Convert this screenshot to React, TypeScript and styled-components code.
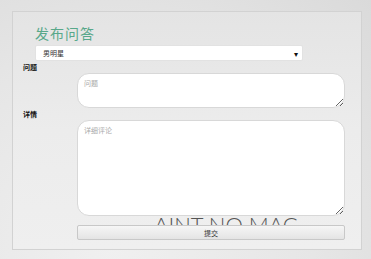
import React from "react"
import styled, { createGlobalStyle } from "styled-components"

const GlobalStyle = createGlobalStyle`
    html, body {
        margin: 0;
        padding: 0;
    }
    body {
        font-family: "Liberation Sans", "Noto Sans CJK SC", sans-serif;
        background: radial-gradient(ellipse at 30% 95%, #f0f0f0 0%, #e6e6e6 55%, #dadada 100%);
        height: 259px;
        overflow: hidden;
    }
`

const App = () => {
    return (
        <>
            <GlobalStyle />
            <Page>
                <Panel>
                    <Title>发布问答</Title>
                    <SelectBox>
                        <span>男明星</span>
                        <Arrow>▾</Arrow>
                    </SelectBox>
                    <Label $gap={1}>问题</Label>
                    <Field $height={35} placeholder="问题" />
                    <Label $gap={1}>详情</Label>
                    <Field $height={96} placeholder="详细评论" />
                    <Banner>AINT NO MAC</Banner>
                    <SubmitButton>提交</SubmitButton>
                </Panel>
            </Page>
        </>
    )
}

const Page = styled.div`
    width: 371px;
    height: 259px;
    padding: 11px 0 0 12px;
    box-sizing: border-box;
`
const Panel = styled.div`
    position: relative;
    width: 350px;
    height: 239px;
    box-sizing: border-box;
    border: 1px solid #d2d2d2;
    background: linear-gradient(180deg, #e4e4e4 0%, #ececec 50%, #efefef 100%);
    padding: 12px 0 0 10px;
    display: flex;
    flex-direction: column;
    align-items: flex-start;
`
const Title = styled.h1`
    margin: 0 0 3px 12px;
    font-family: "Noto Sans CJK SC", sans-serif;
    font-weight: 400;
    font-size: 14px;
    line-height: 18px;
    letter-spacing: 1px;
    color: #58a88a;
`
const SelectBox = styled.div`
    margin-left: 12px;
    width: 268px;
    height: 16px;
    box-sizing: border-box;
    background: #fff;
    border: 1px solid #e2e2e2;
    border-radius: 2px;
    padding: 0 4px 0 7px;
    display: flex;
    align-items: center;
    justify-content: space-between;
    font-family: "Noto Sans CJK SC", sans-serif;
    font-size: 7px;
    color: #333;
`
const Arrow = styled.span`
    font-size: 8px;
    color: #111;
`
const Label = styled.div<{ $gap?: number }>`
    margin-top: ${p => p.$gap ?? 0}px;
    font-family: "Noto Sans CJK SC", sans-serif;
    font-weight: 700;
    font-size: 7px;
    line-height: 10px;
    color: #111;
`
const Field = styled.textarea<{ $height: number }>`
    position: relative;
    z-index: 1;
    margin: 1px 0 0 54px;
    width: 268px;
    height: ${p => p.$height}px;
    box-sizing: border-box;
    background: #fff;
    border: 1px solid #d8d8d8;
    border-radius: 12px;
    padding: 4px 6px;
    font-family: "Noto Sans CJK SC", sans-serif;
    font-size: 7px;
    outline: 0;
    resize: vertical;
    &::placeholder {
        color: #aaa;
    }
`
const Banner = styled.div`
    position: absolute;
    left: 141px;
    top: 198px;
    font-family: Lato, "Open Sans", sans-serif;
    font-weight: 300;
    font-size: 22px;
    letter-spacing: 0;
    line-height: 30px;
    color: #555;
    white-space: nowrap;
`
const SubmitButton = styled.button`
    position: relative;
    z-index: 1;
    margin: 9px 0 0 54px;
    width: 268px;
    height: 15px;
    box-sizing: border-box;
    border: 1px solid #c8c8c8;
    border-radius: 2px;
    background: linear-gradient(180deg, #f6f6f6 0%, #e4e4e4 100%);
    font-family: "Noto Sans CJK SC", sans-serif;
    font-size: 7px;
    line-height: 12px;
    color: #333;
    padding: 0;
`

export default App
